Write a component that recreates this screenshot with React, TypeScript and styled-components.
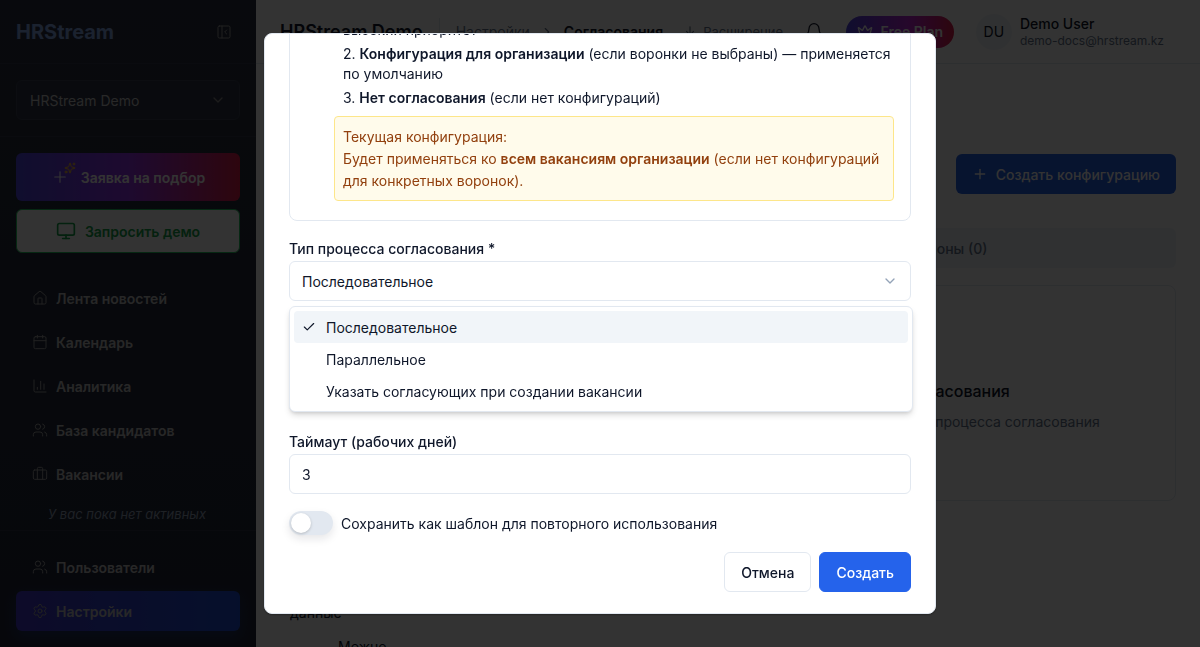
import React from 'react';
import styled, { createGlobalStyle } from 'styled-components';
import {
  ArrowDownToLine,
  Bell,
  Briefcase,
  Calendar,
  ChartColumn,
  Check,
  ChevronDown,
  ChevronRight,
  Crown,
  House,
  Monitor,
  PanelLeftClose,
  Plus,
  Settings,
  Sparkles,
  Users,
} from 'lucide-react';

const GlobalStyle = createGlobalStyle`
  * {
    box-sizing: border-box;
  }

  html,
  body {
    margin: 0;
    height: 100%;
    overflow: hidden;
    font-family: Inter, 'Noto Sans', sans-serif;
    color: #0f172a;
  }

  #root {
    height: 100%;
  }
`;

const Page = styled.div`
  display: flex;
  height: 100vh;
  background: #fff;
  overflow: hidden;
`;

/* Sidebar */
const Sidebar = styled.aside`
  display: flex;
  flex-direction: column;
  flex: 0 0 256px;
  height: 100%;
  background: linear-gradient(180deg, #2a3040 0%, #20263a 100%);
  color: #fff;
`;

const SidebarHead = styled.div`
  display: flex;
  align-items: center;
  justify-content: space-between;
  height: 64px;
  padding: 0 24px 0 16px;
  border-bottom: 1px solid #343a4c;
`;

const Logo = styled.div`
  font-size: 20px;
  font-weight: 700;
  color: #86a8e8;
`;

const OrgSection = styled.div`
  height: 73px;
  padding: 16px 16px 0;
  border-bottom: 1px solid #343a4c;
`;

const OrgSelect = styled.div`
  display: flex;
  align-items: center;
  justify-content: space-between;
  height: 40px;
  padding: 0 13px 0 13px;
  border: 1px solid #3c4254;
  border-radius: 6px;
  background: #2f3547;
  font-size: 14px;
  color: #c8c8c8;
`;

const SidebarScroll = styled.div`
  flex: 1;
  min-height: 0;
  overflow: hidden;
  padding: 16px 16px 0 16px;
`;

const PromoButton = styled.div<{ $variant: 'gradient' | 'demo' }>`
  display: flex;
  align-items: center;
  justify-content: center;
  gap: 6px;
  height: ${(p) => (p.$variant === 'gradient' ? '48px' : '44px')};
  margin-bottom: 8px;
  border-radius: 6px;
  font-size: 14px;
  font-weight: 600;
  color: ${(p) => (p.$variant === 'gradient' ? '#fff' : '#16a34a')};
  background: ${(p) =>
    p.$variant === 'gradient' ? 'linear-gradient(90deg, #4f46e5 0%, #9333ea 50%, #e11d48 100%)' : '#fff'};
  border: ${(p) => (p.$variant === 'gradient' ? '0' : '1px solid #22c55e')};
`;

const PlusSpark = styled.span`
  position: relative;
  display: inline-flex;
  width: 18px;
  height: 20px;
  margin-right: 6px;
  align-items: flex-end;
  color: #fff;

  svg:last-child {
    position: absolute;
    top: -5px;
    right: -7px;
    color: #fbbf24;
  }
`;

const Nav = styled.nav`
  display: flex;
  flex-direction: column;
  gap: 4px;
  margin-top: ${(p: { $top?: number }) => p.$top ?? 0}px;
`;

const NavItem = styled.div<{ $active?: boolean }>`
  display: flex;
  align-items: center;
  gap: 8px;
  height: 40px;
  padding: 0 16px;
  border-radius: 6px;
  font-size: 14px;
  font-weight: 600;
  color: #c4c4c4;
  background: ${(p) => (p.$active ? 'linear-gradient(90deg, #4338ca 0%, #1d4ed8 100%)' : 'transparent')};
  box-shadow: ${(p) => (p.$active ? '0 6px 14px rgba(37, 99, 235, 0.25)' : 'none')};

  svg {
    flex: none;
    color: #a0a0a0;
  }
`;

const NavNote = styled.div`
  padding: 10px 0 0 32px;
  font-size: 13px;
  font-style: italic;
  line-height: 20px;
  color: #94a3b8;
`;

const SidebarFoot = styled.div`
  padding: 16px;
  border-top: 1px solid #2e3446;
`;

/* Main column behind the dialog */
const Main = styled.main`
  flex: 1;
  min-width: 0;
  display: flex;
  flex-direction: column;
`;

const Header = styled.header`
  display: flex;
  align-items: center;
  flex: 0 0 64px;
  padding: 0 36px 0 24px;
  border-bottom: 1px solid #e2e8f0;
`;

const OrgTitle = styled.div`
  padding-right: 16px;
  border-right: 1px solid #e2e8f0;
  font-size: 18px;
  font-weight: 600;
  line-height: 28px;
`;

const Crumbs = styled.div`
  display: flex;
  align-items: center;
  gap: 10px;
  margin-left: 16px;
  font-size: 14px;
  color: #64748b;

  b {
    font-weight: 600;
    color: #0f172a;
  }
`;

const Extension = styled.div`
  display: flex;
  align-items: center;
  gap: 6px;
  margin-left: 20px;
  font-size: 13px;
  color: #64748b;
`;

const HeaderRight = styled.div`
  display: flex;
  align-items: center;
  margin-left: auto;
`;

const PlanBadge = styled.div`
  display: flex;
  align-items: center;
  justify-content: center;
  gap: 8px;
  width: 108px;
  height: 32px;
  margin: 0 22px 0 22px;
  border-radius: 16px;
  background: linear-gradient(90deg, #4f46e5 0%, #c026d3 60%, #e11d48 100%);
  color: #fff;
  font-size: 14px;
  font-weight: 600;
`;

const Avatar = styled.div`
  display: flex;
  align-items: center;
  justify-content: center;
  width: 36px;
  height: 36px;
  margin-right: 8px;
  border-radius: 50%;
  background: #f1f5f9;
  font-size: 14px;
`;

const UserName = styled.div`
  font-size: 14px;
  font-weight: 500;
  line-height: 18px;
`;

const UserMail = styled.div`
  font-size: 12px;
  line-height: 16px;
  color: #64748b;
`;

const Content = styled.div`
  padding: 24px;
`;

const TitleRow = styled.div`
  display: flex;
  align-items: flex-end;
  justify-content: space-between;
  height: 106px;
`;

const PageTitle = styled.h1`
  margin: 0;
  font-size: 24px;
`;

const PrimaryButton = styled.div`
  display: flex;
  align-items: center;
  gap: 8px;
  height: 40px;
  padding: 0 16px;
  border-radius: 6px;
  background: #2563eb;
  color: #fff;
  font-size: 14px;
  font-weight: 500;
`;

const Tabs = styled.div`
  display: grid;
  grid-template-columns: 1fr 1fr;
  height: 40px;
  margin-top: 34px;
  padding: 4px;
  border-radius: 6px;
  background: #f1f5f9;
`;

const Tab = styled.div`
  display: flex;
  align-items: center;
  justify-content: center;
  padding-right: 14px;
  font-size: 14px;
  font-weight: 500;
  color: #64748b;
`;

const EmptyCard = styled.section`
  display: flex;
  flex-direction: column;
  align-items: center;
  justify-content: center;
  gap: 12px;
  height: 216px;
  margin-top: 17px;
  padding-top: 24px;
  border: 1px solid #e2e8f0;
  border-radius: 8px;
  text-align: center;
`;

const EmptyTitle = styled.div`
  font-size: 16px;
  font-weight: 500;
  white-space: nowrap;
`;

const EmptyText = styled.div`
  font-size: 14px;
  color: #64748b;
  white-space: nowrap;
`;

const HelpText = styled.div<{ $indent: number; $top: number }>`
  margin: ${(p) => p.$top}px 0 0 ${(p) => p.$indent}px;
  font-size: 14px;
  line-height: 20px;
`;

/* Dialog */
const Overlay = styled.div`
  position: fixed;
  inset: 0;
  display: flex;
  align-items: center;
  justify-content: center;
  background: rgba(0, 0, 0, 0.8);
`;

const Dialog = styled.div`
  position: relative;
  width: 672px;
  height: 581px;
  padding: 0 24px;
  overflow: hidden;
  border: 1px solid #e2e8f0;
  border-radius: 8px;
  background: #fff;
  box-shadow: 0 1px 2px rgba(0, 0, 0, 0.3);
`;

const InfoCard = styled.div`
  margin-top: -51px;
  padding: 16px 16px 19px 44px;
  border: 1px solid #e2e8f0;
  border-radius: 8px;
`;

const PriorityList = styled.ol`
  display: flex;
  flex-direction: column;
  gap: 4px;
  margin: 0;
  padding: 0 0 0 9px;
  list-style: none;
  font-size: 14px;
  line-height: 20px;

  b {
    font-weight: 600;
  }
`;

const Notice = styled.div`
  margin-top: 8px;
  padding: 9px 8px 8px;
  border: 1px solid #fde68a;
  border-radius: 4px;
  background: #fffbeb;
  color: #92400e;
  font-size: 14px;
  line-height: 22px;

  b {
    font-weight: 600;
  }
`;

const Field = styled.div<{ $top: number }>`
  margin-top: ${(p) => p.$top}px;
`;

const Label = styled.div`
  margin-bottom: 2px;
  font-size: 14px;
  font-weight: 500;
  line-height: 20px;
`;

const SelectBox = styled.div`
  position: relative;
`;

const Control = styled.div<{ $tall?: boolean }>`
  display: flex;
  align-items: center;
  justify-content: space-between;
  height: ${(p) => (p.$tall ? '69px' : '40px')};
  padding: 0 12px;
  border: 1px solid #e2e8f0;
  border-radius: 6px;
  background: #fff;
  font-size: 14px;

  svg {
    color: #94a3b8;
  }
`;

const Dropdown = styled.div`
  position: absolute;
  z-index: 2;
  top: 45px;
  left: 0;
  right: -2px;
  padding: 4px;
  border: 1px solid #e2e8f0;
  border-radius: 6px;
  background: #fff;
  box-shadow:
    0 4px 6px -1px rgba(0, 0, 0, 0.15),
    0 2px 4px -2px rgba(0, 0, 0, 0.15);
`;

const Option = styled.div<{ $selected?: boolean }>`
  display: flex;
  align-items: center;
  height: 32px;
  padding-left: 32px;
  position: relative;
  border-radius: 4px;
  font-size: 14px;
  background: ${(p) => (p.$selected ? '#f1f5f9' : 'transparent')};

  svg {
    position: absolute;
    left: 8px;
    top: 9px;
  }
`;

const ToggleRow = styled.div`
  display: flex;
  align-items: center;
  gap: 8px;
  margin-top: 17px;
  font-size: 14px;
`;

const Toggle = styled.div`
  display: flex;
  align-items: center;
  width: 44px;
  height: 24px;
  padding: 2px;
  border-radius: 12px;
  background: #e2e8f0;
  box-shadow: 0 4px 8px rgba(15, 23, 42, 0.1);

  &::before {
    content: '';
    width: 20px;
    height: 20px;
    border-radius: 50%;
    background: #fff;
    box-shadow: 0 1px 3px rgba(0, 0, 0, 0.2);
  }
`;

const Actions = styled.div`
  display: flex;
  justify-content: flex-end;
  gap: 8px;
  margin-top: 17px;
`;

const ActionButton = styled.div<{ $primary?: boolean }>`
  display: flex;
  align-items: center;
  height: 40px;
  padding: 0 16px;
  border: 1px solid ${(p) => (p.$primary ? '#2563eb' : '#e2e8f0')};
  border-radius: 6px;
  background: ${(p) => (p.$primary ? '#2563eb' : '#fff')};
  color: ${(p) => (p.$primary ? '#fff' : '#0f172a')};
  font-size: 14px;
  font-weight: 500;
`;

const navItems = [
  { icon: House, label: 'Лента новостей' },
  { icon: Calendar, label: 'Календарь' },
  { icon: ChartColumn, label: 'Аналитика' },
  { icon: Users, label: 'База кандидатов' },
  { icon: Briefcase, label: 'Вакансии' },
];

const options = ['Последовательное', 'Параллельное', 'Указать согласующих при создании вакансии'];

export default function App() {
  return (
    <>
      <GlobalStyle />
      <Page>
        <Sidebar>
          <SidebarHead>
            <Logo>HRStream</Logo>
            <PanelLeftClose size={16} color="#a0a0a0" strokeWidth={1.5} />
          </SidebarHead>
          <OrgSection>
            <OrgSelect>
              HRStream Demo
              <ChevronDown size={16} color="#8a8a8a" />
            </OrgSelect>
          </OrgSection>
          <SidebarScroll>
            <PromoButton $variant="gradient">
              <PlusSpark>
                <Plus size={20} strokeWidth={1.5} />
                <Sparkles size={12} />
              </PlusSpark>
              Заявка на подбор
            </PromoButton>
            <PromoButton $variant="demo">
              <Monitor size={20} />
              <span style={{ marginLeft: 3 }}>Запросить демо</span>
            </PromoButton>
            <Nav $top={25}>
              {navItems.map((item) => (
                <NavItem key={item.label}>
                  <item.icon size={16} strokeWidth={1.5} />
                  {item.label}
                </NavItem>
              ))}
            </Nav>
            <NavNote>У вас пока нет активных</NavNote>
          </SidebarScroll>
          <SidebarFoot>
            <Nav>
              <NavItem>
                <Users size={16} strokeWidth={1.5} />
                Пользователи
              </NavItem>
              <NavItem $active>
                <Settings size={16} strokeWidth={1.5} />
                Настройки
              </NavItem>
            </Nav>
          </SidebarFoot>
        </Sidebar>

        <Main>
          <Header>
            <OrgTitle>HRStream Demo</OrgTitle>
            <Crumbs>
              Настройки
              <ChevronRight size={14} />
              <b>Согласования</b>
            </Crumbs>
            <Extension>
              <ArrowDownToLine size={14} />
              Расширение
            </Extension>
            <HeaderRight>
              <Bell size={20} strokeWidth={1.5} />
              <PlanBadge>
                <Crown size={16} />
                Free Plan
              </PlanBadge>
              <Avatar>DU</Avatar>
              <div>
                <UserName>Demo User</UserName>
                <UserMail>demo-docs@hrstream.kz</UserMail>
              </div>
            </HeaderRight>
          </Header>
          <Content>
            <TitleRow>
              <PageTitle>Согласования</PageTitle>
              <PrimaryButton>
                <Plus size={16} />
                Создать конфигурацию
              </PrimaryButton>
            </TitleRow>
            <Tabs>
              <Tab>Конфигурации (0)</Tab>
              <Tab>Шаблоны (0)</Tab>
            </Tabs>
            <EmptyCard>
              <EmptyTitle>У вас пока нет ни одной настроенной конфигурации для согласования</EmptyTitle>
              <EmptyText>
                Создайте первую конфигурацию для того, чтобы начать автоматизацию настройки процесса согласования
              </EmptyText>
            </EmptyCard>
            <HelpText $indent={10} $top={102}>данные</HelpText>
            <HelpText $indent={58} $top={14}>Можно</HelpText>
          </Content>
        </Main>
      </Page>

      <Overlay>
        <Dialog>
          <InfoCard>
            <PriorityList>
              <li>
                1. <b>Конфигурация для конкретных воронок</b> — имеет самый
                <br />
                высокий приоритет
              </li>
              <li>
                2. <b>Конфигурация для организации</b> (если воронки не выбраны) — применяется по умолчанию
              </li>
              <li>
                3. <b>Нет согласования</b> (если нет конфигураций)
              </li>
            </PriorityList>
            <Notice>
              Текущая конфигурация:
              <br />
              Будет применяться ко <b>всем вакансиям организации</b> (если нет конфигураций для конкретных воронок).
            </Notice>
          </InfoCard>

          <Field $top={18}>
            <Label>Тип процесса согласования *</Label>
            <SelectBox>
              <Control>
                Последовательное
                <ChevronDown size={16} />
              </Control>
              <Dropdown>
                {options.map((option, index) => (
                  <Option key={option} $selected={index === 0}>
                    {index === 0 && <Check size={14} color="#0f172a" />}
                    {option}
                  </Option>
                ))}
              </Dropdown>
            </SelectBox>
          </Field>

          <Field $top={20}>
            <Label>Согласующие</Label>
            <Control $tall />
          </Field>

          <Field $top={20}>
            <Label>Таймаут (рабочих дней)</Label>
            <Control>3</Control>
          </Field>

          <ToggleRow>
            <Toggle />
            Сохранить как шаблон для повторного использования
          </ToggleRow>

          <Actions>
            <ActionButton>Отмена</ActionButton>
            <ActionButton $primary>Создать</ActionButton>
          </Actions>
        </Dialog>
      </Overlay>
    </>
  );
}
